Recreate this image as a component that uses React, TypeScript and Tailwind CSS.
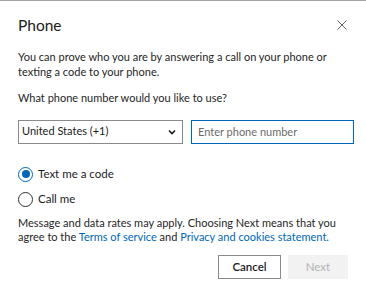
import { useState } from 'react'

const font = { fontFamily: 'Lato, "Open Sans", Arial, sans-serif' }

function Radio({ checked, label, onClick }: { checked: boolean; label: string; onClick: () => void }) {
  return (
    <button onClick={onClick} className="flex items-center h-[25px] gap-[5px] text-left">
      <span
        className={`w-[15px] h-[15px] rounded-full border flex items-center justify-center bg-white ${
          checked ? 'border-[#0067b8]' : 'border-[#323130]'
        }`}
      >
        {checked && <span className="w-[8px] h-[8px] rounded-full bg-[#0067b8]" />}
      </span>
      <span className="text-[11.5px] leading-[14px] text-[#1b1b1b]">{label}</span>
    </button>
  )
}

export default function App() {
  const [method, setMethod] = useState<'text' | 'call'>('text')

  return (
    <div style={font} className="w-[366px] h-[298px] bg-white border-t border-[#a3a3a3] pt-[14px] pl-[18px] pr-[12px] text-[#262626]">
      {/* Header */}
      <div className="flex items-center justify-between h-[20px]">
        <h1 className="text-[15.5px] leading-[20px] text-[#1b1b1b]">Phone</h1>
        <button className="w-[20px] h-[20px] mr-[2px] flex items-center justify-center text-[#5f5f5f]">
          <svg width="10" height="10" viewBox="0 0 10 10" fill="none" stroke="currentColor" strokeWidth="1">
            <path d="M0.5 0.5 L9.5 9.5 M9.5 0.5 L0.5 9.5" />
          </svg>
        </button>
      </div>

      <p className="mt-[15px] text-[11px] leading-[14.5px] whitespace-nowrap">
        You can prove who you are by answering a call on your phone or
        <br />
        texting a code to your phone.
      </p>

      <p className="mt-[12px] text-[11px] leading-[14.5px]">What phone number would you like to use?</p>

      {/* Country + number */}
      <div className="mt-[14px] flex gap-[8px]">
        <div className="w-[165px] h-[24px] border border-[#8a8a8a] flex items-center justify-between pl-[3px] pr-[6px]">
          <span className="text-[11px] text-[#1b1b1b]">United States (+1)</span>
          <svg width="8" height="6" viewBox="0 0 8 6" fill="none" stroke="#1b1b1b" strokeWidth="1.6">
            <path d="M1 1.5 L4 4.5 L7 1.5" />
          </svg>
        </div>
        <input
          placeholder="Enter phone number"
          className="flex-1 min-w-0 h-[24px] border-[1.5px] border-[#0067b8] px-[6px] text-[11px] outline-none placeholder:text-[#6b6b6b]"
        />
      </div>

      {/* Method */}
      <div className="mt-[18px] flex flex-col">
        <Radio checked={method === 'text'} label="Text me a code" onClick={() => setMethod('text')} />
        <Radio checked={method === 'call'} label="Call me" onClick={() => setMethod('call')} />
      </div>

      <p className="mt-[4px] text-[11px] leading-[14.5px] whitespace-nowrap">
        Message and data rates may apply. Choosing Next means that you
        <br />
        agree to the <a className="text-[#0067b8]">Terms of service</a> and{' '}
        <a className="text-[#0067b8]">Privacy and cookies statement.</a>
      </p>

      {/* Actions */}
      <div className="mt-[10px] flex justify-end gap-[7px] mr-[6px]">
        <button className="w-[63px] h-[24px] border border-[#8a8a8a] text-[11.5px] font-semibold text-[#1b1b1b]">
          Cancel
        </button>
        <button disabled className="w-[60px] h-[24px] bg-[#f2f2f2] text-[11.5px] text-[#b3b3b3]">
          Next
        </button>
      </div>
    </div>
  )
}
